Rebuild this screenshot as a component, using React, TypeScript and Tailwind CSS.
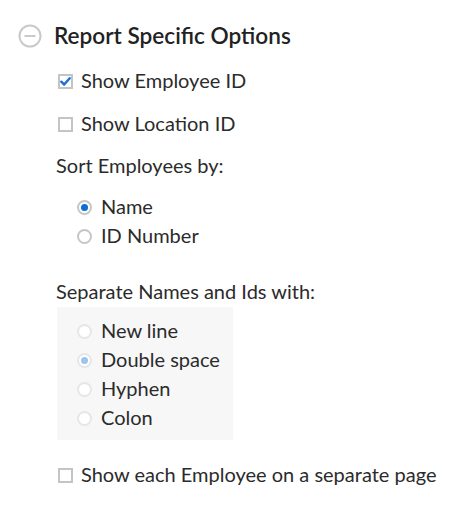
import React from 'react';

function Checkbox({ checked }: { checked?: boolean }) {
  return (
    <span className="w-[15px] h-[15px] shrink-0 border-2 border-[#c4c4c4] bg-white flex items-center justify-center">
      {checked && (
        <svg width="11" height="11" viewBox="0 0 10 10">
          <path d="M1.2 5.2 L3.8 7.8 L8.8 2" fill="none" stroke="#1b6fd6" strokeWidth="2.2" strokeLinecap="round" strokeLinejoin="round" />
        </svg>
      )}
    </span>
  );
}

function Radio({ checked, disabled }: { checked?: boolean; disabled?: boolean }) {
  return (
    <span
      className={`w-[15px] h-[15px] shrink-0 rounded-full border-2 flex items-center justify-center bg-white ${
        disabled ? 'border-[#e6e6e6]' : 'border-[#c6c6c6]'
      }`}
    >
      {checked && (
        <span className={`w-[7px] h-[7px] rounded-full ${disabled ? 'bg-[#9cc4ec]' : 'bg-[#0b6fd4]'}`} />
      )}
    </span>
  );
}

const separators = [
  { label: 'New line' },
  { label: 'Double space', checked: true },
  { label: 'Hyphen' },
  { label: 'Colon' },
];

export default function App() {
  return (
    <div className="w-[468px] h-[508px] bg-white text-[#2b2b2b] text-[20px]" style={{ fontFamily: 'Lato, "Open Sans", sans-serif' }}>
      {/* header */}
      <div className="h-[66px] pt-[6px] pl-[18px] flex items-center gap-[12px]">
        <svg width="24" height="24" viewBox="0 0 24 24">
          <circle cx="12" cy="12" r="10.5" fill="none" stroke="#c9c9c9" strokeWidth="2" />
          <line x1="6.5" y1="12" x2="17.5" y2="12" stroke="#c9c9c9" strokeWidth="2" />
        </svg>
        <span className="text-[22.6px] font-semibold text-[#222]">Report Specific Options</span>
      </div>

      <div className="pl-[56px]">
        <label className="h-[30px] pl-[2px] flex items-center gap-[8px]">
          <Checkbox checked />
          <span className="pb-[2px]">Show Employee ID</span>
        </label>
        <label className="mt-[13px] h-[30px] pl-[2px] flex items-center gap-[8px]">
          <Checkbox />
          <span className="pb-[2px]">Show Location ID</span>
        </label>

        <div className="mt-[12px] h-[30px] pb-[2px] flex items-center">Sort Employees by:</div>
        <div className="mt-[12px] pl-[21px]">
          <label className="h-[29px] flex items-center gap-[9px]">
            <Radio checked />
            <span className="pb-[3px]">Name</span>
          </label>
          <label className="h-[29px] flex items-center gap-[9px]">
            <Radio />
            <span className="pb-[3px]">ID Number</span>
          </label>
        </div>

        <div className="mt-[26px] h-[30px] pb-[2px] flex items-center">Separate Names and Ids with:</div>
        <div className="ml-[1px] w-[176px] bg-[#f7f7f7] pt-[10px] pb-[7px] pl-[20px]">
          {separators.map(s => (
            <label key={s.label} className="h-[29px] flex items-center gap-[9px]">
              <Radio checked={s.checked} disabled />
              <span className="pb-[3px]">{s.label}</span>
            </label>
          ))}
        </div>

        <label className="mt-[20px] h-[30px] pl-[2px] flex items-center gap-[8px]">
          <Checkbox />
          <span className="pb-[2px]">Show each Employee on a separate page</span>
        </label>
      </div>
    </div>
  );
}
